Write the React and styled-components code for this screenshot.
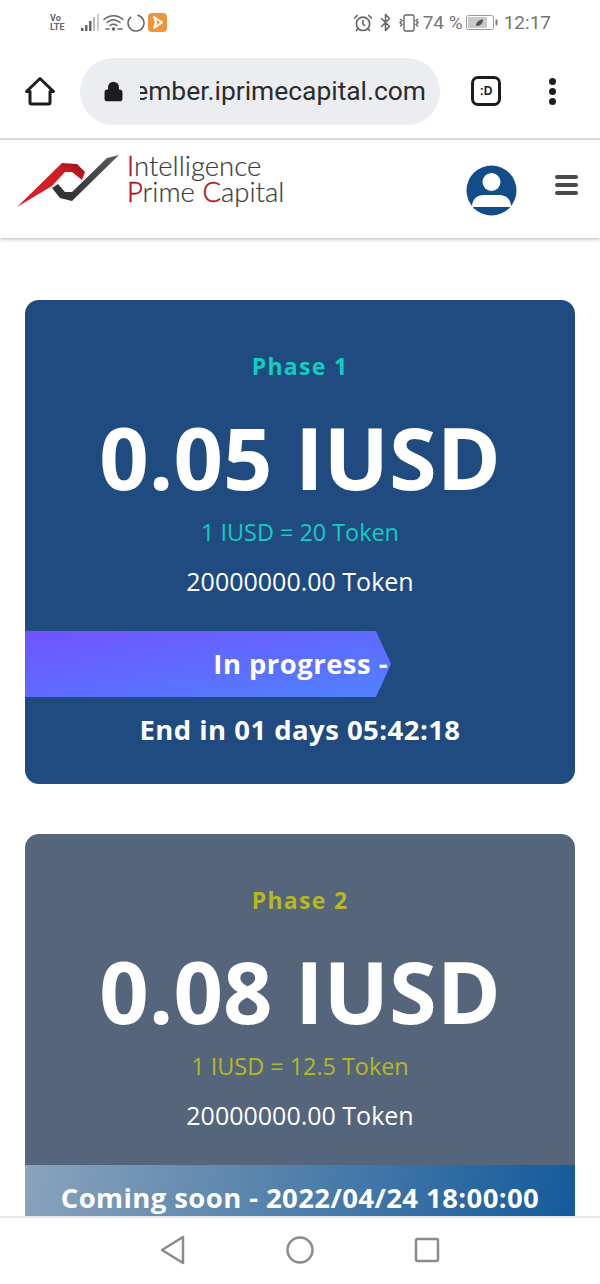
import styled, { createGlobalStyle } from "styled-components";
import { AlarmClock, Bluetooth, Lock } from "lucide-react";

const GlobalStyle = createGlobalStyle`
  html, body {
    margin: 0;
    padding: 0;
    background: #fff;
  }
  * {
    box-sizing: border-box;
  }
`;

const Screen = styled.div`
  width: 600px;
  height: 1284px;
  display: flex;
  flex-direction: column;
  overflow: hidden;
  background: #fff;
  font-family: "Open Sans", sans-serif;
`;

const StatusBar = styled.div`
  height: 45px;
  flex: none;
  display: flex;
  align-items: center;
  justify-content: space-between;
  padding: 0 49px 0 50px;
  color: #757575;
  font-family: Roboto, sans-serif;
`;

const StatusGroup = styled.div`
  display: flex;
  align-items: center;
  gap: ${({ $gap }) => $gap || 3}px;
`;

const VoLte = styled.div`
  font-size: 9px;
  line-height: 9px;
  font-weight: 700;
  color: #666;
  margin-right: 11px;
  width: 17px;
`;

const BatteryText = styled.span`
  font-size: 19px;
  color: #777;
`;

const Clock = styled.span`
  font-size: 19px;
  color: #757575;
  margin-left: 3px;
`;

const BrowserBar = styled.div`
  height: 95px;
  flex: none;
  display: flex;
  align-items: center;
  border-bottom: 2px solid #e4e4e4;
  padding: 0 0 1px 24px;
`;

const UrlPill = styled.div`
  width: 360px;
  height: 67px;
  margin-left: 24px;
  border-radius: 34px;
  background: #ebedf0;
  display: flex;
  align-items: center;
  padding: 0 14px 0 23px;
`;

const UrlClip = styled.div`
  flex: 1;
  min-width: 0;
  margin-left: 16px;
  overflow: hidden;
  display: flex;
  justify-content: flex-end;
  font-family: Roboto, sans-serif;
  font-size: 26.4px;
  color: #2a2b2d;
  white-space: nowrap;
`;

const TabBadge = styled.div`
  width: 30px;
  height: 30px;
  margin-left: 31px;
  border: 3px solid #1d1d1f;
  border-radius: 7px;
  display: flex;
  align-items: center;
  justify-content: center;
  font-family: "Liberation Sans", sans-serif;
  font-size: 12px;
  font-weight: 700;
  color: #1d1d1f;
`;

const MoreDots = styled.div`
  margin-left: 48px;
  display: flex;
  flex-direction: column;
  gap: 3px;
`;

const Dot = styled.span`
  width: 7px;
  height: 7px;
  border-radius: 50%;
  background: #1d1d1f;
`;

const SiteHeader = styled.header`
  height: 98px;
  flex: none;
  display: flex;
  align-items: center;
  padding: 0 22px 3px 17px;
  background: #fff;
  box-shadow: 0 1px 4px rgba(0, 0, 0, 0.3);
  position: relative;
  z-index: 2;
`;

const Brand = styled.div`
  display: flex;
  align-items: center;
  flex: 1;
  padding-bottom: 11px;
`;

const BrandName = styled.div`
  margin-left: 7px;
  margin-bottom: 7px;
  font-family: Lato, sans-serif;
  font-weight: 300;
  font-size: 27.5px;
  line-height: 26px;
  color: #3c3c3e;
  -webkit-text-stroke: 0.2px #3c3c3e;
  white-space: nowrap;
`;

const RedLetter = styled.span`
  color: #b3151c;
  -webkit-text-stroke: 0.5px #b3151c;
`;

const AvatarSlot = styled.div`
  display: flex;
  margin-top: 6px;
  margin-right: 1px;
`;

const Burger = styled.div`
  margin-left: 37px;
  width: 23px;
  display: flex;
  flex-direction: column;
  gap: 4px;
  margin-top: -5px;
`;

const BurgerLine = styled.span`
  height: 4px;
  border-radius: 2px;
  background: #4a4a4a;
`;

const Content = styled.main`
  flex: 1;
  min-height: 0;
  overflow: hidden;
  padding: 62px 25px 0;
  display: flex;
  flex-direction: column;
  gap: 50px;
`;

const Card = styled.section`
  flex: none;
  width: 550px;
  border-radius: 14px;
  background: ${({ $muted }) => ($muted ? "#55657c" : "#204b80")};
  color: #fff;
  text-align: center;
  padding-top: 50px;
  overflow: hidden;
`;

const PhaseTitle = styled.div`
  font-size: 23px;
  line-height: 32px;
  font-weight: 700;
  letter-spacing: 1.3px;
  color: ${({ $accent }) => $accent};
`;

const Price = styled.div`
  margin-top: 19px;
  font-size: 86.6px;
  line-height: 110px;
  font-weight: 700;
  white-space: nowrap;
`;

const Rate = styled.div`
  margin-top: 5px;
  font-size: 23.4px;
  line-height: 32px;
  color: ${({ $accent }) => $accent};
`;

const Supply = styled.div`
  margin-top: 16px;
  font-size: 25px;
  line-height: 34px;
`;

const ProgressBanner = styled.div`
  margin-top: 33px;
  width: 366px;
  height: 66px;
  display: flex;
  align-items: center;
  justify-content: flex-end;
  padding: 0 3px 2px 0;
  font-size: 27.4px;
  font-weight: 700;
  letter-spacing: 0.5px;
  background: linear-gradient(170deg, #7053ff 0%, #4f82ff 100%);
  clip-path: polygon(0 0, 351px 0, 100% 50%, 351px 100%, 0 100%);
`;

const Countdown = styled.div`
  margin-top: 14px;
  padding-bottom: 35px;
  font-size: 27.5px;
  line-height: 38px;
  font-weight: 700;
  letter-spacing: 0.45px;
`;

const SoonBanner = styled.div`
  margin-top: 33px;
  height: 66px;
  display: flex;
  align-items: center;
  justify-content: center;
  padding-bottom: 2px;
  font-size: 27.5px;
  font-weight: 700;
  letter-spacing: 0.4px;
  white-space: nowrap;
  background: linear-gradient(100deg, #8aa3bc 0%, #5b86ae 40%, #135a9c 100%);
`;

const NavBar = styled.nav`
  height: 68px;
  flex: none;
  background: #fff;
  border-top: 2px solid #e8e8e8;
  display: flex;
  align-items: center;
  justify-content: center;
  gap: 100px;
  padding-bottom: 3px;
  position: relative;
  z-index: 2;
`;

const HomeIcon = () => (
  <svg width="32" height="32" viewBox="0 0 32 32" fill="none" stroke="#1d1d1f" strokeWidth="3" strokeLinejoin="round">
    <path d="M2.5 16.5 16 3.5l13.5 13H26v11a1.5 1.5 0 0 1-1.5 1.5h-17A1.5 1.5 0 0 1 6 27.500V16.500z" />
  </svg>
);

const LogoMark = () => (
  <svg width="103" height="54" viewBox="0 0 103 54">
    <defs>
      <linearGradient id="logoRed" x1="0" y1="1" x2="1" y2="0">
        <stop offset="0" stopColor="#d8232a" />
        <stop offset="0.75" stopColor="#d01c24" />
        <stop offset="1" stopColor="#8c1016" />
      </linearGradient>
      <linearGradient id="logoDark" x1="0" y1="1" x2="1" y2="0">
        <stop offset="0" stopColor="#2c2c2e" />
        <stop offset="1" stopColor="#5a5a5c" />
      </linearGradient>
    </defs>
    <path d="M0 52 45 8l15 1 8 8-3 8-10-8h-7L35 31z" fill="url(#logoRed)" />
    <path d="M35 33l6-4 7 8h7L90 3l12-3-44 43-3 3-12-3z" fill="url(#logoDark)" />
  </svg>
);

const UserAvatar = () => (
  <svg width="51" height="51" viewBox="0 0 51 51">
    <circle cx="25.500" cy="25.500" r="25" fill="#134d87" />
    <circle cx="25.500" cy="17" r="9" fill="#fff" />
    <path d="M6 42c0-8 5-12 12-12h15c7 0 12 4 12 12z" fill="#fff" />
  </svg>
);

const SignalIcon = () => (
  <svg width="19" height="18" viewBox="0 0 19 18">
    <rect x="0" y="14" width="2.500" height="3" fill="#666" />
    <rect x="4" y="11" width="2.500" height="6" fill="#666" />
    <rect x="8" y="7" width="2.500" height="10" fill="#666" />
    <rect x="12" y="3" width="2" height="14" fill="#bbb" />
    <rect x="16" y="0" width="2" height="17" fill="#ccc" />
  </svg>
);

const WifiIcon = () => (
  <svg width="21" height="18" viewBox="0 0 21 18" fill="none" stroke="#666" strokeWidth="1.500" strokeLinecap="round">
    <path d="M1 5.500c5.500-5 13.500-5 19 0" />
    <path d="M4 8.500c4-3.500 9-3.500 13 0" />
    <path d="M7 11.500c2-1.500 5-1.500 7 0" />
    <circle cx="10.500" cy="15" r="1" fill="#666" />
    <path d="M15 15h4M6 15H3" />
  </svg>
);

const SyncRing = () => (
  <svg width="18" height="18" viewBox="0 0 18 18" fill="none" stroke="#666" strokeWidth="1.500">
    <path d="M10.500 1.200A8 8 0 1 1 4 2.800" />
  </svg>
);

const PlayBadge = () => (
  <svg width="19" height="19" viewBox="0 0 19 19">
    <rect width="19" height="19" rx="4" fill="#f0943c" />
    <path d="M6 4l8 5.500L6 15l2-5.500z" fill="none" stroke="#fff" strokeWidth="2" strokeLinejoin="round" />
  </svg>
);

const VibrateIcon = () => (
  <svg width="22" height="18" viewBox="0 0 22 18" fill="none" stroke="#666" strokeWidth="1.400">
    <rect x="6" y="1" width="10" height="16" rx="1.500" />
    <path d="M2 5l2 1.500-2 2 2 2-2 2M20 5l-2 1.500 2 2-2 2 2 2" />
  </svg>
);

const BatteryIcon = () => (
  <svg width="32" height="15" viewBox="0 0 32 15">
    <rect x="0.500" y="0.500" width="27" height="14" rx="2" fill="#fff" stroke="#999" />
    <rect x="2" y="2" width="19" height="11" fill="#c9c9c9" />
    <path d="M10 11c0-4 3-6 7-7 0 4-2 7-7 7z" fill="#555" />
    <rect x="29.500" y="4.500" width="2" height="6" rx="1" fill="#777" />
  </svg>
);

const BackIcon = () => (
  <svg width="26" height="30" viewBox="0 0 26 30" fill="none" stroke="#8b8b8b" strokeWidth="2.500" strokeLinejoin="round">
    <path d="M23 2v26L2 15z" />
  </svg>
);

const CircleIcon = () => (
  <svg width="28" height="28" viewBox="0 0 28 28" fill="none" stroke="#8b8b8b" strokeWidth="2.500">
    <circle cx="14" cy="14" r="12.500" />
  </svg>
);

const SquareIcon = () => (
  <svg width="26" height="26" viewBox="0 0 26 26" fill="none" stroke="#8b8b8b" strokeWidth="2.500">
    <rect x="2" y="2" width="22" height="22" rx="1.500" />
  </svg>
);

const App = () => (
  <Screen>
    <GlobalStyle />
    <StatusBar>
      <StatusGroup>
        <VoLte>
          Vo
          <br />
          LTE
        </VoLte>
        <SignalIcon />
        <WifiIcon />
        <SyncRing />
        <PlayBadge />
      </StatusGroup>
      <StatusGroup $gap={3}>
        <AlarmClock size={20} color="#666" strokeWidth={2} />
        <Bluetooth size={19} color="#666" strokeWidth={2} />
        <VibrateIcon />
        <BatteryText>74 %</BatteryText>
        <BatteryIcon />
        <Clock>12:17</Clock>
      </StatusGroup>
    </StatusBar>

    <BrowserBar>
      <HomeIcon />
      <UrlPill>
        <Lock size={21} color="#1d1d1f" fill="#1d1d1f" strokeWidth={2.500} />
        <UrlClip>
          <span>member.iprimecapital.com</span>
        </UrlClip>
      </UrlPill>
      <TabBadge>:D</TabBadge>
      <MoreDots>
        <Dot />
        <Dot />
        <Dot />
      </MoreDots>
    </BrowserBar>

    <SiteHeader>
      <Brand>
        <LogoMark />
        <BrandName>
          <RedLetter>I</RedLetter>ntelligence
          <br />
          <RedLetter>P</RedLetter>rime <RedLetter>C</RedLetter>apital
        </BrandName>
      </Brand>
      <AvatarSlot>
        <UserAvatar />
      </AvatarSlot>
      <Burger>
        <BurgerLine />
        <BurgerLine />
        <BurgerLine />
      </Burger>
    </SiteHeader>

    <Content>
      <Card>
        <PhaseTitle $accent="#12cdc0">Phase 1</PhaseTitle>
        <Price>0.05 IUSD</Price>
        <Rate $accent="#12cdc0">1 IUSD = 20 Token</Rate>
        <Supply>20000000.00 Token</Supply>
        <ProgressBanner>In progress -</ProgressBanner>
        <Countdown>End in 01 days 05:42:18</Countdown>
      </Card>
      <Card $muted>
        <PhaseTitle $accent="#b5b823">Phase 2</PhaseTitle>
        <Price>0.08 IUSD</Price>
        <Rate $accent="#b5b823">1 IUSD = 12.5 Token</Rate>
        <Supply>20000000.00 Token</Supply>
        <SoonBanner>Coming soon - 2022/04/24 18:00:00</SoonBanner>
      </Card>
    </Content>

    <NavBar>
      <BackIcon />
      <CircleIcon />
      <SquareIcon />
    </NavBar>
  </Screen>
);

export default App;
